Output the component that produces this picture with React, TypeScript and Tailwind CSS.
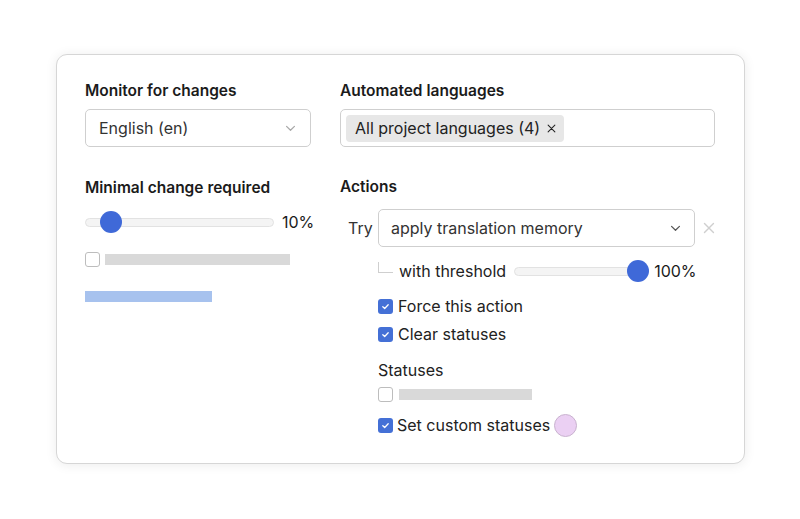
import React from "react";

const font = { fontFamily: "Inter, 'Noto Sans', sans-serif" };

function Chevron({ className }: { className?: string }) {
  return (
    <svg viewBox="0 0 12 8" className={className} fill="none" stroke="currentColor" strokeWidth={1.4} strokeLinecap="round" strokeLinejoin="round">
      <path d="M1.5 1.5 6 6l4.5-4.5" />
    </svg>
  );
}

function Cross({ className }: { className?: string }) {
  return (
    <svg viewBox="0 0 12 12" className={className} fill="none" stroke="currentColor" strokeWidth={1.4} strokeLinecap="round">
      <path d="M1.5 1.5l9 9M10.5 1.5l-9 9" />
    </svg>
  );
}

function Checkbox({ checked }: { checked?: boolean }) {
  if (!checked) {
    return <span className="block h-[15px] w-[15px] shrink-0 rounded-[3px] border border-[#bdbdbd] bg-white" />;
  }
  return (
    <span className="flex h-[15px] w-[15px] shrink-0 items-center justify-center rounded-[3px] bg-[#4470d6]">
      <svg viewBox="0 0 10 10" className="h-[9px] w-[9px]" fill="none" stroke="white" strokeWidth={1.4} strokeLinecap="round" strokeLinejoin="round">
        <path d="M2 5.2 4.1 7.2 8 3" />
      </svg>
    </span>
  );
}

function Slider({ width, thumbAt }: { width: string; thumbAt: string }) {
  return (
    <div className={`relative h-[9px] shrink-0 rounded-full border border-[#e2e2e2] bg-[#f4f4f4] ${width}`}>
      <span className={`absolute top-1/2 h-[22px] w-[22px] -translate-y-1/2 rounded-full bg-[#3f69d8] ${thumbAt}`} />
    </div>
  );
}

export default function App() {
  return (
    <div className="flex h-[519px] w-[800px] items-start bg-white pl-[56px] pt-[54px] text-[#1b1b1b]" style={font}>
      <div className="grid h-[410px] w-[689px] grid-cols-[226px_375px] gap-x-[29px] rounded-[11px] border border-[#d6d6d6] bg-white pl-[28px] pt-[26px] shadow-[0_1px_12px_rgba(0,0,0,0.08)]">
        {/* left column */}
        <div className="flex flex-col">
          <h2 className="text-[15.5px] font-semibold leading-[20px]">Monitor for changes</h2>
          <div className="mt-[8px] flex h-[38px] items-center justify-between rounded-[5px] border border-[#cfcfcf] pl-[13px] pr-[14px]">
            <span className="text-[16px] text-[#333]">English (en)</span>
            <Chevron className="h-[7px] w-[11px] text-[#a8a8a8]" />
          </div>

          <h2 className="mt-[31px] text-[15.5px] font-semibold leading-[20px]">Minimal change required</h2>
          <div className="mt-[13px] flex h-[22px] items-center">
            <Slider width="w-[189px]" thumbAt="left-[14px]" />
            <span className="ml-[8px] whitespace-nowrap text-[16px]">10%</span>
          </div>
          <div className="mt-[19px] flex items-center gap-[5px]">
            <Checkbox />
            <span className="h-[11px] w-[185px] bg-[#d9d9d9]" />
          </div>
          <span className="mt-[24px] h-[11px] w-[127px] bg-[#a7c2ee]" />
        </div>

        {/* right column */}
        <div className="flex flex-col">
          <h2 className="text-[15.5px] font-semibold leading-[20px]">Automated languages</h2>
          <div className="mt-[8px] flex h-[38px] items-center rounded-[5px] border border-[#cfcfcf] pl-[5px]">
            <span className="flex h-[27px] items-center gap-[7px] rounded-[4px] bg-[#e7e7e7] pl-[9px] pr-[8px] text-[16px] text-[#222]">
              All project languages (4)
              <Cross className="h-[9px] w-[9px] text-[#222]" />
            </span>
          </div>

          <h2 className="mt-[30px] text-[15.5px] font-semibold leading-[20px]">Actions</h2>
          <div className="mt-[12px] flex items-center">
            <span className="w-[38px] pl-[8px] text-[16px] text-[#333]">Try</span>
            <div className="flex h-[38px] w-[318px] items-center justify-between rounded-[5px] border border-[#cfcfcf] pl-[12px] pr-[13px]">
              <span className="text-[16px] text-[#333]">apply translation memory</span>
              <Chevron className="h-[7px] w-[11px] text-[#555]" />
            </div>
            <Cross className="ml-[8px] h-[12px] w-[12px] text-[#cfcfcf]" />
          </div>

          <div className="mt-[13px] flex h-[22px] items-center pl-[38px]">
            <span className="mb-[8px] h-[11px] w-[15px] border-b border-l border-[#cfcfcf]" />
            <span className="ml-[6px] text-[16px] text-[#222]">with threshold</span>
            <div className="ml-[8px]">
              <Slider width="w-[133px]" thumbAt="right-[-3px]" />
            </div>
            <span className="ml-[7px] text-[16px]">100%</span>
          </div>

          <div className="mt-[16px] flex flex-col gap-[12px] pl-[38px] text-[16px] text-[#222]">
            <div className="flex h-[16px] items-center gap-[5px]">
              <Checkbox checked />
              <span>Force this action</span>
            </div>
            <div className="flex h-[16px] items-center gap-[5px]">
              <Checkbox checked />
              <span>Clear statuses</span>
            </div>
          </div>

          <div className="mt-[18px] pl-[38px] text-[16px] leading-[20px] text-[#222]">Statuses</div>
          <div className="mt-[7px] flex items-center gap-[6px] pl-[38px]">
            <Checkbox />
            <span className="h-[11px] w-[133px] bg-[#d9d9d9]" />
          </div>
          <div className="mt-[11px] flex items-center gap-[4px] pl-[38px] text-[16px] text-[#222]">
            <Checkbox checked />
            <span>Set custom statuses</span>
            <span className="h-[23px] w-[23px] rounded-full border border-[#c9b3cf] bg-[#ebd0f3]" />
          </div>
        </div>
      </div>
    </div>
  );
}
